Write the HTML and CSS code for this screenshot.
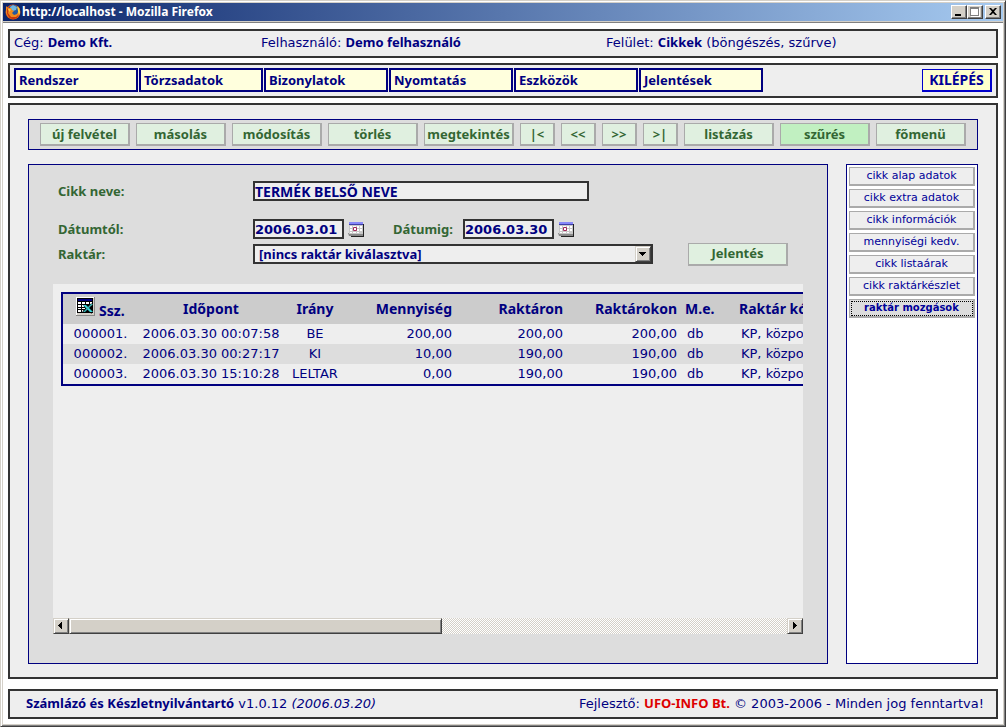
FILE: index.html
```html
<!DOCTYPE html>
<html lang="hu">
<head>
<meta charset="utf-8">
<title>http://localhost - Mozilla Firefox</title>
<link rel="stylesheet" href="styles.css">
</head>
<body>
<div class="window">
  <header class="titlebar">
    <svg class="logo" viewBox="0 0 16 16" aria-hidden="true">
      <circle cx="8" cy="8" r="7.5" fill="#d9541a"/>
      <circle cx="8.5" cy="6.500" r="5.500" fill="#24599f"/>
      <path d="M5 3 8 1l4 2-1 3-3 1-2-1z" fill="#6fb7e0"/>
      <path d="M1 2 3 4l3 0 1 2 2 1-2 2 2 2 3-1 2-4-1-4 2 3v5l-3 4-4 1-5-2-2-4z" fill="#f08a1c"/>
      <path d="M2 4 4 6 3 9l3 4 5 0 3-3-2 4-4 1.500-4-2-2-4z" fill="#c8380e"/>
      <path d="M12 2l2 2 1 4-1 3-1-4z" fill="#ffd84a"/>
      <path d="M3 5l2 0 1 1-2 2z" fill="#ffc23c"/>
    </svg>
    <span class="title">http://localhost - Mozilla Firefox</span>
    <div class="controls">
      <button class="ctl" type="button" aria-label="Kis méret"><svg viewBox="0 0 12 10"><path d="M2 7h6v2H2z"/></svg></button>
      <button class="ctl" type="button" aria-label="Teljes méret" disabled><svg viewBox="0 0 12 10"><path d="M2 1h9v9H2z" fill="#fff"/><path d="M1 0h9v9H1zM2 2v6h7V2z" fill="#808080" fill-rule="evenodd"/></svg></button>
      <button class="ctl close" type="button" aria-label="Bezárás"><svg viewBox="0 0 12 10"><path d="M2 1h2l2 2 2-2h2L7 4.500 10 8H8L6 6 4 8H2l3-3.500z"/></svg></button>
    </div>
  </header>

  <div class="page">
    <section class="box info">
      <span>Cég: <b>Demo Kft.</b></span>
      <span>Felhasználó: <b>Demo felhasználó</b></span>
      <span>Felület: <b>Cikkek</b> (böngészés, szűrve)</span>
    </section>

    <nav class="box menu">
      <a href="#">Rendszer</a>
      <a href="#">Törzsadatok</a>
      <a href="#">Bizonylatok</a>
      <a href="#">Nyomtatás</a>
      <a href="#">Eszközök</a>
      <a href="#">Jelentések</a>
      <button class="exit" type="button">KILÉPÉS</button>
    </nav>

    <main class="box main">
      <div class="toolbar">
        <button class="btn" type="button">új felvétel</button>
        <button class="btn" type="button">másolás</button>
        <button class="btn" type="button">módosítás</button>
        <button class="btn" type="button">törlés</button>
        <button class="btn" type="button">megtekintés</button>
        <button class="btn step" type="button">|&lt;</button>
        <button class="btn step" type="button">&lt;&lt;</button>
        <button class="btn step" type="button">&gt;&gt;</button>
        <button class="btn step" type="button">&gt;|</button>
        <button class="btn" type="button">listázás</button>
        <button class="btn active" type="button">szűrés</button>
        <button class="btn" type="button">főmenü</button>
      </div>

      <div class="columns">
        <section class="panel">
          <form class="filter">
            <div class="row first">
              <label for="nev">Cikk neve:</label>
              <input class="field name" id="nev" type="text" value="TERMÉK BELSŐ NEVE">
            </div>
            <div class="row">
              <label for="tol">Dátumtól:</label>
              <input class="field date" id="tol" type="text" value="2006.03.01">
              <button class="cal" type="button" aria-label="Naptár"><svg viewBox="0 0 16 16"><path d="M3 3h13v13H3z" fill="#222"/><path d="M0 12h15v3H1z" fill="#888"/><path d="M1 1h14v12H1z" fill="#c8c8c8"/><path d="M1 1h14v2H1z" fill="#8888f8"/><path d="M1 3h14v1H1z" fill="#4040a8"/><path d="M2 5h2v2H2zM5 5h3v2H5zM9 5h2v2H9zM12 5h2v2h-2zM2 8h2v2H2zM9 8h2v2H9zM12 8h2v2h-2zM2 11h2v1H2zM5 11h3v1H5zM9 11h2v1H9zM5 7h3v3H5z" fill="#fff"/><path d="M5.500 6.500h3v3h-3z" fill="#fff" stroke="#a02858"/></svg></button>
              <label class="second" for="ig">Dátumig:</label>
              <input class="field date" id="ig" type="text" value="2006.03.30">
              <button class="cal" type="button" aria-label="Naptár"><svg viewBox="0 0 16 16"><path d="M3 3h13v13H3z" fill="#222"/><path d="M0 12h15v3H1z" fill="#888"/><path d="M1 1h14v12H1z" fill="#c8c8c8"/><path d="M1 1h14v2H1z" fill="#8888f8"/><path d="M1 3h14v1H1z" fill="#4040a8"/><path d="M2 5h2v2H2zM5 5h3v2H5zM9 5h2v2H9zM12 5h2v2h-2zM2 8h2v2H2zM9 8h2v2H9zM12 8h2v2h-2zM2 11h2v1H2zM5 11h3v1H5zM9 11h2v1H9zM5 7h3v3H5z" fill="#fff"/><path d="M5.500 6.500h3v3h-3z" fill="#fff" stroke="#a02858"/></svg></button>
            </div>
            <div class="row">
              <label for="raktar">Raktár:</label>
              <div class="select">
                <select class="field" id="raktar"><option>[nincs raktár kiválasztva]</option></select>
                <svg class="arrow bevel" viewBox="0 0 12 12" aria-hidden="true"><path d="M2 4h7v1H2zM3 5h5v1H3zM4 6h3v1H4zM5 7h1v1H5z"/></svg>
              </div>
              <button class="btn report" type="button">Jelentés</button>
            </div>
          </form>

          <div class="results">
            <div class="viewport">
              <table class="moves">
                <colgroup><col class="c-no"><col class="c-time"><col class="c-dir"><col class="c-qty"><col class="c-qty"><col class="c-all"><col class="c-unit"><col class="c-store"></colgroup>
                <thead>
                  <tr>
                    <th class="no"><button class="xls" type="button" aria-label="Excel"><svg viewBox="0 0 19 19"><path d="M0 0h19v19H0z" fill="#888"/><path d="M0 0h18v18H0z" fill="#fff"/><path d="M1 1h17v17H1z" fill="#d4d0c8"/><path d="M1 1h16v15H1z"/><path d="M2 2h14v2H2z" fill="#000080"/><path d="M2 5h3v2H2zM6 5h3v2H6zM10 5h3v2h-3zM14 5h2v2h-2zM2 8h3v2H2zM6 8h2v2H6zM14 8h2v1h-2zM2 11h3v1H2zM6 11h3v1H6zM2 13h3v2H2zM6 13h2v2H6z" fill="#fff"/><path d="M8 8l8 8M16 7l-9 8" stroke="#000" stroke-width="2"/><path d="M7 8h3l7 7h-3z" fill="#38d8d8"/><path d="M15 7h2l-8 8H7z" fill="#38b8b8"/></svg></button> Ssz.</th>
                    <th>Időpont</th><th>Irány</th><th class="num">Mennyiség</th><th class="num">Raktáron</th><th class="num">Raktárokon</th><th class="txt">M.e.</th><th class="txt">Raktár kód</th>
                  </tr>
                </thead>
                <tbody>
                  <tr><td>000001.</td><td>2006.03.30 00:07:58</td><td>BE</td><td class="num">200,00</td><td class="num">200,00</td><td class="num">200,00</td><td class="txt">db</td><td class="txt">KP, központ</td></tr>
                  <tr><td>000002.</td><td>2006.03.30 00:27:17</td><td>KI</td><td class="num">10,00</td><td class="num">190,00</td><td class="num">190,00</td><td class="txt">db</td><td class="txt">KP, központ</td></tr>
                  <tr><td>000003.</td><td>2006.03.30 15:10:28</td><td>LELTAR</td><td class="num">0,00</td><td class="num">190,00</td><td class="num">190,00</td><td class="txt">db</td><td class="txt">KP, központ</td></tr>
                </tbody>
              </table>
            </div>
            <div class="scrollbar">
              <button class="bevel end" type="button" aria-label="Balra"><svg viewBox="0 0 12 12"><path d="M7 2v7H6V8H5V7H4V6H3V5h1V4h1V3h1V2z"/></svg></button>
              <div class="track"><div class="bevel thumb"></div></div>
              <button class="bevel end" type="button" aria-label="Jobbra"><svg viewBox="0 0 12 12"><path d="M4 2v7h1V8h1V7h1V6h1V5H7V4H6V3H5V2z"/></svg></button>
            </div>
          </div>
        </section>

        <aside class="side">
          <button type="button">cikk alap adatok</button>
          <button type="button">cikk extra adatok</button>
          <button type="button">cikk információk</button>
          <button type="button">mennyiségi kedv.</button>
          <button type="button">cikk listaárak</button>
          <button type="button">cikk raktárkészlet</button>
          <button class="current" type="button">raktár mozgások</button>
        </aside>
      </div>
    </main>

    <footer class="box foot">
      <span><b>Számlázó és Készletnyilvántartó</b> v1.0.12 <i>(2006.03.20)</i></span>
      <span>Fejlesztő: <b class="dev">UFO-INFO Bt.</b> © 2003-2006 - Minden jog fenntartva!</span>
    </footer>
  </div>
</div>
</body>
</html>
```
FILE: styles.css
```css
* { box-sizing: border-box; }

body {
  margin: 0;
  color: #000080;
  font: 13px/18px "DejaVu Sans", sans-serif;
}

button, input, select { margin: 0; padding: 0; font: inherit; color: inherit; border-radius: 0; }
svg { display: block; }
b { font-family: "Noto Sans", sans-serif; line-height: 1; }

.window {
  display: flex;
  flex-direction: column;
  min-height: 100vh;
  padding: 1px;
  background: #d4d0c8;
  border: 1px solid #d4d0c8;
  border-right-color: #404040;
  border-bottom-color: #404040;
  box-shadow: inset 1px 1px #fff, inset -1px -1px #808080;
}

.titlebar {
  display: flex;
  align-items: center;
  height: 18px;
  margin: 1px 1px 0;
  padding: 0 2px;
  color: #fff;
  background: linear-gradient(90deg, #0a246a, #a6caf0);
}
.logo { width: 16px; height: 16px; }
.title { flex: 1; font: bold 12px/18px "Noto Sans", sans-serif; padding-left: 1px; }
.controls { display: flex; }
.ctl {
  width: 16px;
  height: 14px;
  padding: 1px;
  background: #d4d0c8;
  border: 1px solid #fff;
  border-right-color: #404040;
  border-bottom-color: #404040;
  box-shadow: inset -1px -1px #808080;
}
.ctl svg { width: 12px; height: 10px; }
.close { margin-left: 2px; }

.page {
  flex: 1;
  display: flex;
  flex-direction: column;
  gap: 5px;
  margin: 1px;
  padding: 6px 5px 5px;
  background: #fff;
  border-top: 1px solid #808080;
}

.box { background: #eee; border: 2px solid #333; }

.info {
  display: grid;
  grid-template-columns: 247fr 345fr 390fr;
  padding: 3px 0 4px 4px;
}

.menu { display: flex; gap: 1px; padding: 3px 4px 4px; }
.menu a {
  width: 124px;
  height: 24px;
  padding-left: 3px;
  border: 2px solid #000080;
  background: #ffffdd;
  color: #000080;
  font: bold 13px/20px "Noto Sans", sans-serif;
  text-decoration: none;
}
.exit {
  width: 70px;
  height: 23px;
  margin: 1px 0 0 auto;
  border: 1px solid #0000cc;
  border-width: 1px 2px 2px 1px;
  background: #ffffcc;
  color: #000099;
  font: bold 14px/18px "Noto Sans", sans-serif;
}

.main {
  flex: 1;
  display: flex;
  flex-direction: column;
  gap: 14px;
  padding: 14px 18px 13px;
}

.toolbar {
  display: flex;
  gap: 6px;
  padding: 3px 11px;
  border: 1px solid #000080;
  background: #ddd;
}
.btn {
  width: 90px;
  height: 23px;
  padding-bottom: 1px;
  border: 1px solid #aaa;
  border-width: 1px 2px 2px 1px;
  background: #e0f0e0;
  color: #336633;
  font: bold 13px/18px "Noto Sans", sans-serif;
}
.step { width: 35px; }
.active { background: #c1f0c1; }

.columns { flex: 1; display: flex; gap: 18px; }

.panel {
  flex: 1;
  min-width: 0;
  display: flex;
  flex-direction: column;
  gap: 20px;
  padding: 16px 24px 29px;
  border: 1px solid #000080;
  background: #ddd;
}

.filter { display: flex; flex-direction: column; gap: 5px; padding-left: 5px; }
.row { display: flex; align-items: center; height: 20px; }
.first { margin-bottom: 13px; }
.row label {
  width: 195px;
  color: #336633;
  font: bold 13px/18px "Noto Sans", sans-serif;
}
.row .second { width: 70px; margin-left: 29px; }
.field {
  height: 20px;
  border: 2px solid #333;
  background: #eee;
  color: #000080;
  font: bold 13px/16px "Noto Sans", sans-serif;
}
.name { width: 336px; font-size: 14px; }
.date { width: 91px; font-family: "DejaVu Sans", sans-serif; }
.cal { width: 16px; height: 16px; margin-left: 4px; border: 0; background: none; }
.select { position: relative; width: 400px; }
.select .field { display: block; width: 100%; padding-left: 4px; appearance: none; }
.bevel {
  background: #d4d0c8;
  border: 1px solid #d4d0c8;
  border-right-color: #404040;
  border-bottom-color: #404040;
  box-shadow: inset 1px 1px #fff, inset -1px -1px #808080;
}
.arrow { position: absolute; right: 2px; top: 2px; width: 16px; height: 16px; padding: 1px; pointer-events: none; }
.report { width: 100px; margin-left: 35px; }

.results { flex: 1; display: flex; flex-direction: column; background: #eee; }
.viewport { flex: 1; overflow: hidden; padding: 8px 0 0 8px; }

.moves {
  width: 1000px;
  table-layout: fixed;
  border-collapse: separate;
  border-spacing: 0;
  border: 2px solid #000080;
  text-align: center;
}
.c-no { width: 75px; }
.c-time { width: 146px; }
.c-dir { width: 62px; }
.c-qty { width: 111px; }
.c-all { width: 114px; }
.c-unit { width: 54px; }
.moves th {
  height: 30px;
  padding: 0;
  background: #ccc;
  font: bold 14px/20px "Noto Sans", sans-serif;
  white-space: nowrap;
}
.moves td { height: 20px; padding: 0; white-space: nowrap; }
.moves tbody tr:nth-child(even) { background: #ddd; }
.moves .num { text-align: right; padding-right: 5px; }
.moves .txt { text-align: left; padding-left: 5px; }
.moves th.txt { padding-left: 3px; }
.xls { display: inline-block; width: 19px; height: 19px; border: 0; background: none; vertical-align: 0; }

.scrollbar { display: flex; height: 16px; }
.end { width: 16px; height: 16px; padding: 1px; }
.end svg { width: 12px; height: 12px; }
.track {
  flex: 1;
  background: repeating-conic-gradient(#fff 0 25%, #d4d0c8 0 50%) 0 0 / 2px 2px;
}
.thumb { width: 52%; height: 16px; }

.side {
  display: flex;
  flex-direction: column;
  gap: 3px;
  width: 132px;
  padding: 2px;
  border: 1px solid #000080;
  background: #fff;
}
.side button {
  height: 19px;
  border: 1px solid #aaa;
  border-width: 1px 2px 2px 1px;
  background: #eee;
  color: #000099;
  font-size: 11px;
  line-height: 16px;
}
.side .current {
  background: #ddd;
  font-size: 10px;
  font-weight: bold;
  outline: 1px dotted #000;
  outline-offset: -3px;
}

.foot { display: flex; justify-content: space-between; margin-top: 5px; padding: 4px 12px 4px 16px; }
.dev { color: #dd0000; }
```
